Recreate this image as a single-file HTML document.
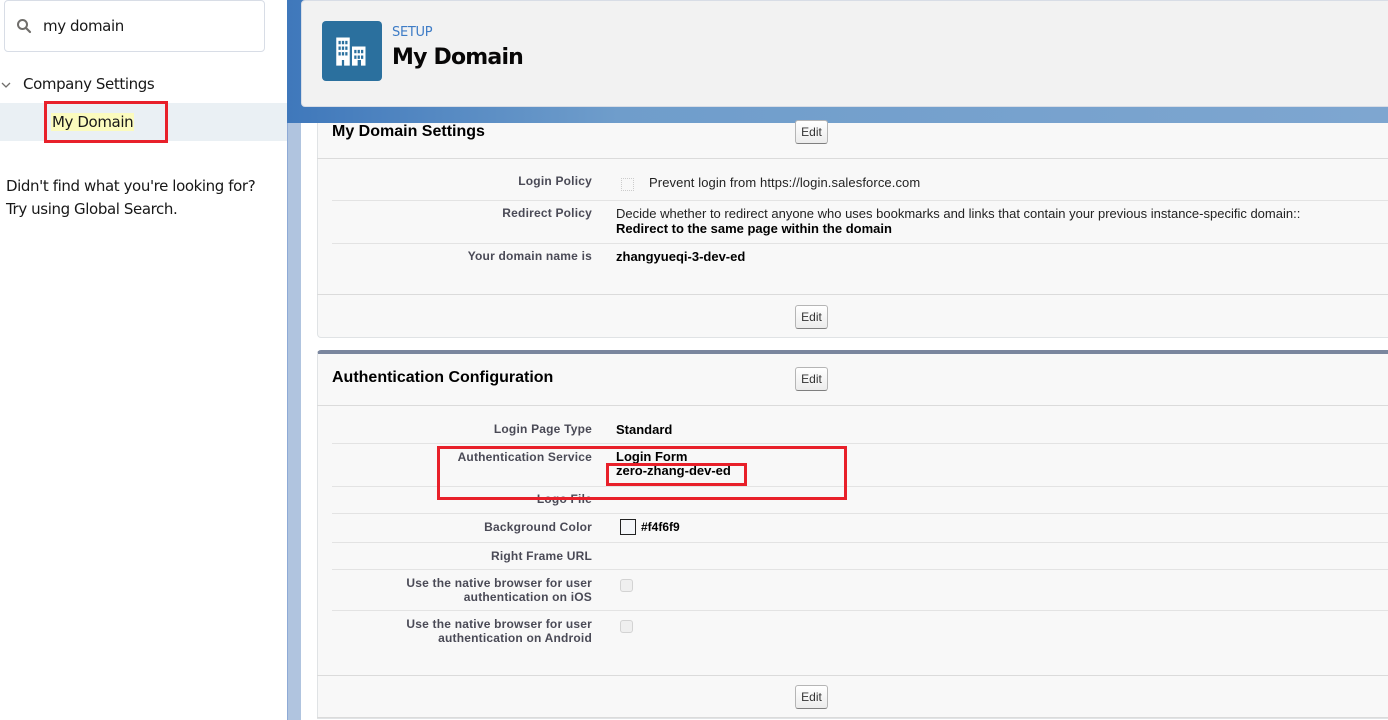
<!DOCTYPE html>
<html><head><meta charset="utf-8"><style>
*{margin:0;padding:0;box-sizing:border-box}
body{width:1388px;height:720px;overflow:hidden;position:relative;background:#fff;font-family:"Liberation Sans",Arial,sans-serif;color:#000}
.a{position:absolute;white-space:nowrap}
.side{font-family:"DejaVu Sans","Liberation Sans",sans-serif;font-size:15px;color:#181818;letter-spacing:-0.4px}
.lbl{position:absolute;right:796px;text-align:right;font-size:12px;font-weight:bold;color:#4a4a56;line-height:14px;white-space:nowrap;letter-spacing:0.2px}
.val{position:absolute;left:616px;font-size:13px;line-height:15px;white-space:nowrap}
.hl{position:absolute;left:332px;right:0;height:1px;background:#e3e3e3}
.btn{position:absolute;left:795px;width:33px;height:24px;border:1px solid #b5b5b5;border-bottom-color:#7f7f7f;border-radius:3px;background:linear-gradient(#fff,#ececec);font-size:12px;color:#333;text-align:center;line-height:22px}
.cb{position:absolute;left:620px;width:13px;height:13px;border:1px solid #d3d3d3;border-radius:3px;background:#efefef}
.rb{position:absolute;border:3px solid #e8202a}
</style></head><body>
<div class="a" style="left:4px;top:0;width:261px;height:52px;border:1px solid #d8dde6;border-radius:4px"></div>
<svg class="a" style="left:16px;top:18px" width="16" height="16" viewBox="0 0 16 16"><circle cx="6.5" cy="6.5" r="4.5" fill="none" stroke="#706e6b" stroke-width="2"/><path d="M10 10l4 4" stroke="#706e6b" stroke-width="2.2" stroke-linecap="round"/></svg>
<div class="a side" style="left:43px;top:17px">my domain</div>
<svg class="a" style="left:1px;top:81px" width="10" height="8" viewBox="0 0 10 8"><path d="M1 2l4 4 4-4" fill="none" stroke="#706e6b" stroke-width="1.3"/></svg>
<div class="a side" style="left:23px;top:75px">Company Settings</div>
<div class="a" style="left:0;top:103px;width:287px;height:38px;background:#eaf0f4"></div>
<div class="a side" style="left:51px;top:113px;background:#fbfbbe;padding:0 1px">My Domain</div>
<div class="rb" style="left:44px;top:101px;width:124px;height:42px"></div>
<div class="a side" style="left:6px;top:175px;line-height:23px">Didn't find what you're looking for?<br>Try using Global Search.</div>
<div class="a" style="left:287px;top:0;width:1101px;height:123px;background:linear-gradient(90deg,#3f78bb,#6f9dcb 30%,#7ea6d0)"></div>
<div class="a" style="left:287px;top:123px;width:14px;height:597px;background:#b0c4df;border-left:1px solid #8eaad6"></div>
<div class="a" style="left:301px;top:0;width:1100px;height:107px;background:#f2f2f2;border:1px solid #d8dde6;border-radius:4px"></div>
<div class="a" style="left:322px;top:21px;width:60px;height:60px;background:#2b709e;border-radius:4px"></div>
<svg class="a" style="left:334px;top:33px" width="36" height="36" viewBox="0 0 32 32" fill="#fff"><path d="M2 4h12v25H9v-5H7v5H2z"/><path d="M16 12h12v17h-4v-5h-3v5h-5z"/><g fill="#2b709e"><rect x="4" y="7" width="2" height="3"/><rect x="7" y="7" width="2" height="3"/><rect x="10" y="7" width="2" height="3"/><rect x="4" y="12" width="2" height="3"/><rect x="7" y="12" width="2" height="3"/><rect x="10" y="12" width="2" height="3"/><rect x="4" y="17" width="2" height="3"/><rect x="7" y="17" width="2" height="3"/><rect x="10" y="17" width="2" height="3"/><rect x="18" y="15" width="2" height="3"/><rect x="21" y="15" width="2" height="3"/><rect x="24" y="15" width="2" height="3"/><rect x="18" y="20" width="2" height="3"/><rect x="21" y="20" width="2" height="3"/><rect x="24" y="20" width="2" height="3"/></g></svg>
<div class="a" style="left:392px;top:25px;font-size:13px;color:#3e7cc6;font-family:'DejaVu Sans',sans-serif;letter-spacing:-0.3px">SETUP</div>
<div class="a" style="left:392px;top:45px;font-size:22px;font-weight:bold;color:#080707;font-family:'DejaVu Sans',sans-serif;letter-spacing:-0.8px">My Domain</div>
<div class="a" style="left:317px;top:123px;width:1080px;height:215px;background:#f8f8f8;border:1px solid #e0e3e5;border-top:none;border-radius:0 0 4px 4px"></div>
<div class="a" style="left:332px;top:123px;font-size:16px;font-weight:bold">My Domain Settings</div>
<div class="btn" style="top:120px">Edit</div>
<div class="a" style="left:317px;top:158px;width:1071px;height:1px;background:#dbdbdb"></div>
<div class="lbl" style="top:174px">Login Policy</div>
<div class="cb" style="left:621px;top:178px;background:#f8f8f8;border:1px dotted #ccc;border-radius:0"></div>
<div class="val" style="left:649px;top:175px;color:#222;letter-spacing:0.1px">Prevent login from https://login.salesforce.com</div>
<div class="hl" style="top:200px"></div>
<div class="lbl" style="top:206px">Redirect Policy</div>
<div class="val" style="top:206px;color:#222">Decide whether to redirect anyone who uses bookmarks and links that contain your previous instance-specific domain::<br><b style="color:#000">Redirect to the same page within the domain</b></div>
<div class="hl" style="top:243px"></div>
<div class="lbl" style="top:249px">Your domain name is</div>
<div class="val" style="top:249px;font-weight:bold">zhangyueqi-3-dev-ed</div>
<div class="a" style="left:317px;top:294px;width:1071px;height:1px;background:#dbdbdb"></div>
<div class="btn" style="top:305px">Edit</div>
<div class="a" style="left:317px;top:350px;width:1080px;height:369px;background:#f8f8f8;border:1px solid #e0e3e5;border-top:4px solid #7a869e;border-radius:4px 4px 0 0"></div>
<div class="a" style="left:332px;top:369px;font-size:16px;font-weight:bold">Authentication Configuration</div>
<div class="btn" style="top:367px">Edit</div>
<div class="a" style="left:317px;top:405px;width:1071px;height:1px;background:#dbdbdb"></div>
<div class="lbl" style="top:422px">Login Page Type</div>
<div class="val" style="top:422px;font-weight:bold">Standard</div>
<div class="hl" style="top:443px"></div>
<div class="lbl" style="top:450px">Authentication Service</div>
<div class="val" style="top:450px;font-weight:bold;line-height:14px">Login Form<br>zero-zhang-dev-ed</div>
<div class="hl" style="top:486px"></div>
<div class="lbl" style="top:492px">Logo File</div>
<div class="hl" style="top:513px"></div>
<div class="lbl" style="top:520px">Background Color</div>
<div class="a" style="left:620px;top:519px;width:16px;height:16px;border:1px solid #222;background:#f4f6f9"></div>
<div class="val" style="left:641px;top:520px;font-weight:bold;font-size:12px">#f4f6f9</div>
<div class="hl" style="top:542px"></div>
<div class="lbl" style="top:549px">Right Frame URL</div>
<div class="hl" style="top:569px"></div>
<div class="lbl" style="top:576px">Use the native browser for user<br>authentication on iOS</div>
<div class="cb" style="top:579px"></div>
<div class="hl" style="top:610px"></div>
<div class="lbl" style="top:617px">Use the native browser for user<br>authentication on Android</div>
<div class="cb" style="top:620px"></div>
<div class="a" style="left:317px;top:675px;width:1071px;height:1px;background:#dbdbdb"></div>
<div class="btn" style="top:685px">Edit</div>
<div class="a" style="left:317px;top:717px;width:1071px;height:1px;background:#dbdbdb"></div>
<div class="rb" style="left:437px;top:446px;width:410px;height:54px"></div>
<div class="rb" style="left:606px;top:463px;width:141px;height:23px"></div>
</body></html>
